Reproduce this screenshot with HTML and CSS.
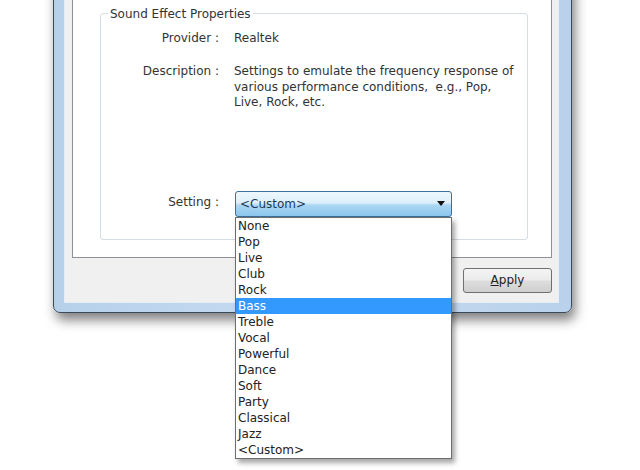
FILE: index.html
```html
<!DOCTYPE html>
<html>
<head>
<meta charset="utf-8">
<link rel="stylesheet" href="styles.css">
</head>
<body>
<div class="window">
  <div class="client">
    <div class="tabpage">
      <div class="group">
        <div class="legend">Sound Effect Properties</div>
        <div class="grid">
          <div class="lbl r1">Provider :</div>
          <div class="val r1">Realtek</div>
          <div class="lbl r2">Description :</div>
          <div class="val r2">Settings to emulate the frequency response of<br>various performance conditions,&nbsp; e.g., Pop,<br>Live, Rock, etc.</div>
          <div class="lbl r3 setlbl">Setting :</div>
          <div class="val r3">
            <div class="combo">
              <span class="combo-text">&lt;Custom&gt;</span>
              <svg class="arrow" width="8" height="5" viewBox="0 0 8 5"><path d="M0 0H8L4 5Z" fill="#111"/></svg>
              <ul class="list">
                <li>None</li>
                <li>Pop</li>
                <li>Live</li>
                <li>Club</li>
                <li>Rock</li>
                <li class="sel">Bass</li>
                <li>Treble</li>
                <li>Vocal</li>
                <li>Powerful</li>
                <li>Dance</li>
                <li>Soft</li>
                <li>Party</li>
                <li>Classical</li>
                <li>Jazz</li>
                <li>&lt;Custom&gt;</li>
              </ul>
            </div>
          </div>
        </div>
      </div>
    </div>
    <div class="buttons">
      <button class="btn"><span class="u">A</span>pply</button>
    </div>
  </div>
</div>
</body>
</html>
```
FILE: styles.css
```css
html, body {
  margin: 0;
  padding: 0;
  background: #ffffff;
  width: 640px;
  height: 470px;
  overflow: hidden;
  font-family: "DejaVu Sans", Tahoma, sans-serif;
  font-size: 12px;
  color: #222;
}

.window {
  position: absolute;
  left: 53px;
  top: -37px;
  width: 519px;
  box-sizing: border-box;
  border: 1px solid #3b4a5a;
  border-radius: 0 0 7px 7px;
  background: linear-gradient(90deg, #b7d0ea, #c6dcf2 50%, #b9d1ea);
  padding: 0 12px 9px 10px;
  box-shadow: 3px 7px 12px rgba(0, 0, 0, 0.5);
}

.client {
  background: #f0f0f0;
  border: 1px solid #e4ecf5;
  border-top: none;
  padding: 0 6px 9px 7px;
}

.tabpage {
  background: #ffffff;
  border: 1px solid #8e9096;
  border-top: none;
  padding: 49px 23px 17px 27px;
}

.group {
  border: 1px solid #d6dde3;
  border-radius: 3px;
  padding: 0 0 22px 0;
}

.legend {
  width: fit-content;
  margin: -8px 0 0 7px;
  padding: 0 2px;
  background: #fff;
  line-height: 16px;
  color: #333;
}

.grid {
  display: grid;
  grid-template-columns: 118px 1fr;
  column-gap: 15px;
  line-height: 16px;
}

.lbl {
  text-align: right;
  color: #333;
}

.val {
  color: #333;
}

.r1 { margin-top: 8px; }
.r2 { margin-top: 18px; line-height: 15.5px; }
.r3 { margin-top: 80px; }
.setlbl { padding-top: 3px; }

.combo {
  position: relative;
  width: 217px;
  height: 26px;
  box-sizing: border-box;
  margin-left: 1px;
  border: 1px solid #3c6f98;
  border-radius: 3px;
  background: linear-gradient(180deg, #eef7fd 0%, #ddeffb 45%, #aad6f3 55%, #8cc6ec 100%);
  display: flex;
  align-items: center;
  padding-left: 4px;
}

.combo-text {
  color: #1b3a5a;
  flex: 1;
}

.arrow {
  margin-right: 6px;
}

.list {
  position: absolute;
  left: -1px;
  top: 25px;
  width: 217px;
  box-sizing: border-box;
  margin: 0;
  padding: 0;
  list-style: none;
  background: #fff;
  border: 1px solid #6d6d6d;
  box-shadow: 3px 4px 5px rgba(0, 0, 0, 0.35);
}

.list li {
  height: 16px;
  line-height: 16px;
  padding-left: 2px;
  color: #222;
}

.list li.sel {
  background: #3399ff;
  color: #fff;
}

.buttons {
  display: flex;
  justify-content: flex-end;
  margin-top: 10px;
}

.btn {
  width: 89px;
  height: 25px;
  border: 1px solid #707070;
  border-radius: 3px;
  background: linear-gradient(180deg, #f4f4f4 0%, #ebebeb 48%, #dddddd 52%, #cfcfcf 100%);
  font-family: "DejaVu Sans", Tahoma, sans-serif;
  font-size: 12px;
  color: #222;
  padding: 0;
}

.u {
  text-decoration: underline;
}
```
